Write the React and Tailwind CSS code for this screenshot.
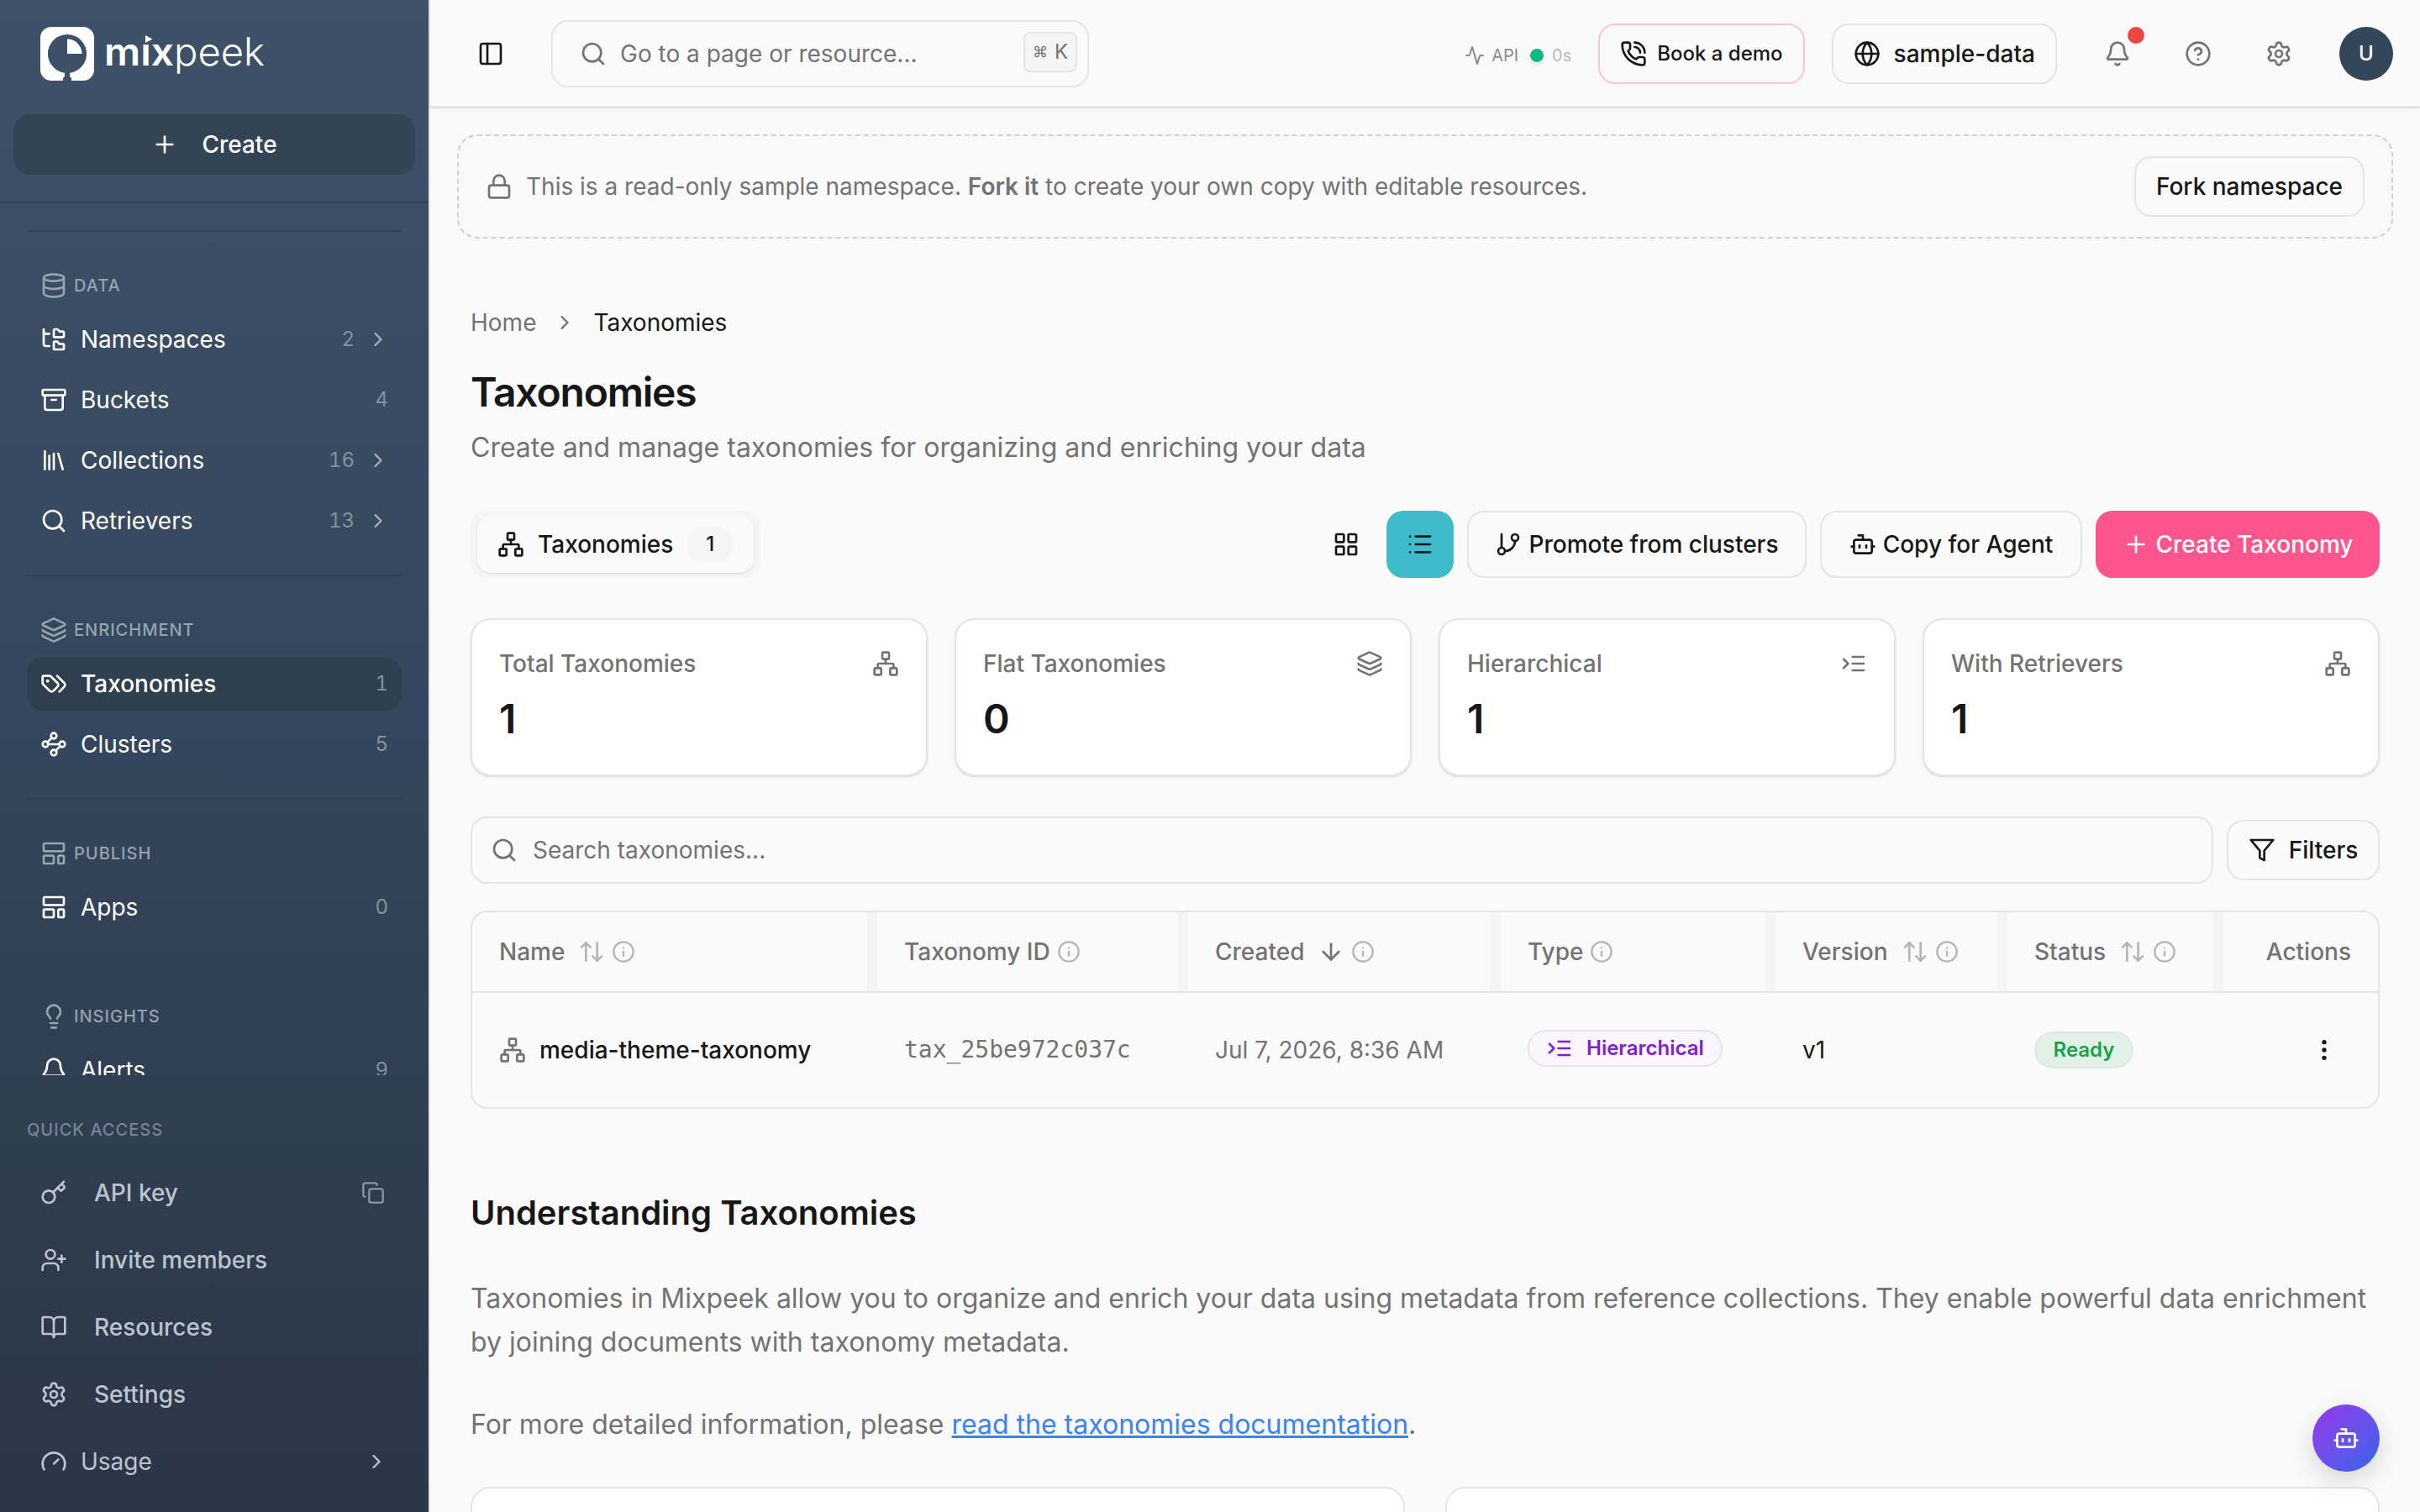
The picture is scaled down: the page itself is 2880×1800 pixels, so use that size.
import React from "react";
import {
  Plus, Database, FolderTree, Archive, Library, Search, Layers, Waypoints, LayoutTemplate,
  Lightbulb, Bell, Key, UserPlus, BookOpen, Settings, Gauge, Copy, ChevronRight, PanelLeft, Activity,
  PhoneCall, Globe, CircleHelp, Lock, Network, LayoutGrid, List, GitBranch, Bot, ArrowUpDown, Info,
  ArrowDown, EllipsisVertical,
} from "lucide-react";

function Stroke({ className, children }) {
  return (
    <svg viewBox="0 0 24 24" fill="none" stroke="currentColor" strokeWidth="2" strokeLinecap="round" strokeLinejoin="round" className={className}>
      {children}
    </svg>
  );
}

const Indent = ({ className }) => (
  <Stroke className={className}>
    <path d="m3 8 4 4-4 4M21 12H11M21 6H11M21 18H11" />
  </Stroke>
);

const Funnel = ({ className }) => (
  <Stroke className={className}>
    <polygon points="22 3 2 3 10 12.46 10 19 14 21 14 12.46 22 3" />
  </Stroke>
);

const Tags = ({ className }) => (
  <Stroke className={className}>
    <path d="m15 5 6.300 6.300a2.400 2.400 0 0 1 0 3.400L17 19" />
    <path d="M9.586 5.586A2 2 0 0 0 8.172 5H3a1 1 0 0 0-1 1v5.172a2 2 0 0 0 .586 1.414L8.290 18.290a2.426 2.426 0 0 0 3.420 0l3.580-3.580a2.426 2.426 0 0 0 0-3.420z" />
    <circle cx="6.500" cy="9.500" r=".5" fill="currentColor" />
  </Stroke>
);

const navGroups = [
  {
    label: "DATA", icon: Database, items: [
      { name: "Namespaces", icon: FolderTree, count: "2", more: true },
      { name: "Buckets", icon: Archive, count: "4" },
      { name: "Collections", icon: Library, count: "16", more: true },
      { name: "Retrievers", icon: Search, count: "13", more: true },
    ],
  },
  {
    label: "ENRICHMENT", icon: Layers, items: [
      { name: "Taxonomies", icon: Tags, count: "1", active: true },
      { name: "Clusters", icon: Waypoints, count: "5" },
    ],
  },
  { label: "PUBLISH", icon: LayoutTemplate, items: [{ name: "Apps", icon: LayoutTemplate, count: "0" }] },
  { label: "INSIGHTS", icon: Lightbulb, items: [{ name: "Alerts", icon: Bell, count: "9" }] },
];

const quick = [
  { name: "API key", icon: Key, copy: true },
  { name: "Invite members", icon: UserPlus },
  { name: "Resources", icon: BookOpen },
  { name: "Settings", icon: Settings },
];

function Logo() {
  return (
    <div className="flex h-16 items-center">
      <svg viewBox="0 0 64 64" className="size-16 shrink-0">
        <path
          fill="#fff"
          fillRule="evenodd"
          d="M13 0h38a13 13 0 0 1 13 13v38a13 13 0 0 1-13 13H37v-3l-2-2v-4.200a23 23 0 1 0-6 0V59l-2 2v3H13A13 13 0 0 1 0 51V13A13 13 0 0 1 13 0Z"
        />
        <path fill="#fff" d="M32 14.500a17.500 17.500 0 0 1 17.500 17.500H32Z" />
      </svg>
      <svg viewBox="0 0 200 64" className="ml-3 h-16 w-[200px] overflow-visible">
        <text x="0" y="46" fill="#fff" fontSize="46" fontFamily="Inter" fontWeight="600" textLength="83" lengthAdjust="spacingAndGlyphs">mix</text>
        <text x="83" y="46" fill="#fff" fontSize="46" fontFamily="Inter" fontWeight="300" textLength="108" lengthAdjust="spacingAndGlyphs">peek</text>
        <rect x="46" y="6" width="13" height="13.500" fill="#3c5166" />
        <path d="M49 10v9l8.500-4.500Z" fill="#fff" />
      </svg>
    </div>
  );
}

function Sidebar() {
  return (
    <aside className="flex h-[1800px] w-[512px] shrink-0 flex-col border-r-2 border-[#e5e5e5] bg-linear-to-b from-[#3d5268] via-[#34465b] to-[#2b3647] text-[28px]">
      <div className="h-[242px] shrink-0 border-b-2 border-[#2f4153] px-4 pt-8">
        <div className="pl-8"><Logo /></div>
        <button className="mt-10 flex h-[72px] w-full items-center justify-center gap-7 rounded-[20px] bg-[#334456] font-medium text-white">
          <Plus className="size-8" />
          <span>Create</span>
        </button>
      </div>
      <nav className="h-[1038px] shrink-0 overflow-hidden px-8">
        {navGroups.map((g) => (
          <section key={g.label} className="pt-8">
            <div className="h-0.5 bg-[#2f4153]" />
            <div className="mt-8 flex h-16 items-center gap-2 px-4 text-[20px] font-medium tracking-[0.05em] text-[#97a3b0]">
              <g.icon className="size-8" />
              <span>{g.label}</span>
            </div>
            <div className="flex flex-col gap-2">
              {g.items.map((it) => (
                <div key={it.name} className={"flex h-16 items-center rounded-[20px] pl-4 text-white " + (it.active ? "bg-[#2f3f4f] font-medium" : "")}>
                  <it.icon className="size-8" />
                  <span className="ml-4 flex-1">{it.name}</span>
                  <span className="text-[24px] font-normal text-[#8391a1] tabular-nums">{it.count}</span>
                  {it.more ? <ChevronRight className="mr-3.5 ml-3.5 size-7 text-[#a6b1bc]" /> : <span className="w-4" />}
                </div>
              ))}
            </div>
          </section>
        ))}
      </nav>
      <div className="px-8 pt-12 text-[#bcc5cd]">
        <div className="h-[34px] text-[20px] leading-[34px] font-medium tracking-[0.05em] text-[#778593]">QUICK ACCESS</div>
        <div className="mt-[18px]">
          {quick.map((q) => (
            <div key={q.name} className="flex h-20 items-center pl-4 font-medium">
              <q.icon className="size-8" />
              <span className="ml-8 flex-1">{q.name}</span>
              {q.copy && <Copy className="mr-5 size-7 text-[#8a96a3]" />}
            </div>
          ))}
          <div className="flex h-20 items-center pl-4">
            <Gauge className="size-8" />
            <span className="ml-4 flex-1">Usage</span>
            <ChevronRight className="mr-4 size-7" />
          </div>
        </div>
      </div>
    </aside>
  );
}

function Header() {
  return (
    <header className="flex h-32 shrink-0 items-center border-b-2 border-[#e5e5e5] pt-0.5 pr-8 pl-14 shadow-sm">
      <PanelLeft className="size-8" />
      <div className="ml-14 flex h-20 w-[640px] items-center rounded-[20px] border-2 border-[#e5e5e5] pr-3 pl-8 text-[#737373]">
        <Search className="size-8" />
        <span className="ml-4 flex-1">Go to a page or resource...</span>
        <kbd className="mb-1 flex h-12 w-16 items-center justify-center gap-2 rounded-lg border-2 border-[#e5e5e5] bg-[#f5f5f5] font-[Inter] text-[24px]">
          <span className="text-[18px]">⌘</span>K
        </kbd>
      </div>
      <div className="ml-auto flex items-center">
        <div className="mt-1 flex items-center text-[20px] text-[#8a8a8a]">
          <Activity className="size-6" />
          <span className="ml-2">API</span>
          <span className="mr-2 ml-3 size-5 rounded-full border-2 border-white bg-[#10b981] shadow-sm" />
          <span className="text-[#b8b8b8]">0s</span>
        </div>
        <button className="ml-8 flex h-[72px] items-center gap-3 rounded-[20px] border-2 border-[#f9c6d7] px-6 text-[24px] font-medium">
          <PhoneCall className="size-8" />
          Book a demo
        </button>
        <button className="ml-8 flex h-[72px] items-center gap-4 rounded-[20px] border-2 border-[#e5e5e5] px-6 font-medium">
          <Globe className="size-8" />
          sample-data
        </button>
        <div className="relative ml-10 flex size-16 items-center justify-center text-[#737373]">
          <Bell className="size-8" />
          <span className="absolute top-0 left-11 size-5 rounded-full bg-[#ef4444]" />
        </div>
        <CircleHelp className="ml-12 size-8 text-[#737373]" />
        <Settings className="ml-16 size-8 text-[#737373]" />
        <div className="ml-14 flex size-16 items-center justify-center rounded-full bg-[#34475a] text-[24px] font-medium text-white">U</div>
      </div>
    </header>
  );
}

const stats = [
  { label: "Total Taxonomies", value: "1", icon: Network },
  { label: "Flat Taxonomies", value: "0", icon: Layers },
  { label: "Hierarchical", value: "1", icon: Indent },
  { label: "With Retrievers", value: "1", icon: Network },
];

const columns = [
  { label: "Name", sort: "both" },
  { label: "Taxonomy ID" },
  { label: "Created", sort: "down" },
  { label: "Type" },
  { label: "Version", sort: "both" },
  { label: "Status", sort: "both" },
];

function Table() {
  return (
    <div className="mt-8 h-[236px] overflow-hidden rounded-[20px] border-2 border-[#e5e5e5]">
      <div className="grid h-24 grid-cols-[482px_370px_372px_327px_276px_257px_1fr] border-b-2 border-[#e5e5e5] font-medium text-[#737373]">
        {columns.map((c) => (
          <div key={c.label} className="flex items-center border-r-12 border-[#f4f4f4] pl-8">
            <span>{c.label}</span>
            {c.sort === "both" && <ArrowUpDown className="ml-4 size-8 opacity-50" />}
            {c.sort === "down" && <ArrowDown className="ml-4 size-8" />}
            <Info className="ml-2 size-7 opacity-50" />
          </div>
        ))}
        <div className="flex items-center justify-end pr-8">Actions</div>
      </div>
      <div className="grid h-[136px] grid-cols-[482px_370px_372px_327px_276px_257px_1fr] items-center *:pl-8">
        <div className="flex items-center gap-4 font-medium">
          <Network className="size-8 text-[#737373]" />
          media-theme-taxonomy
        </div>
        <div className="font-['DejaVu_Sans_Mono',monospace] text-[#737373]">tax_25be972c037c</div>
        <div className="text-[#737373]">Jul 7, 2026, 8:36 AM</div>
        <div className="flex pb-1">
          <span className="flex h-11 items-center gap-4 rounded-full border-2 border-[#e6e3ea] bg-[#faf5ff] px-5 text-[24px] font-semibold text-[#7e22ce]">
            <Indent className="size-8" />
            Hierarchical
          </span>
        </div>
        <div>v1</div>
        <div className="flex">
          <span className="flex h-11 w-[118px] items-center justify-center rounded-full border-2 border-[#e0e8e3] bg-[#e1f1e8] text-[24px] font-semibold text-[#16a34a]">Ready</span>
        </div>
        <div className="flex justify-end pr-12"><EllipsisVertical className="size-8" /></div>
      </div>
    </div>
  );
}

const outline = "flex items-center justify-center border-2 border-[#e5e5e5] rounded-[20px] font-medium";

export default function App() {
  return (
    <div className="relative flex h-[1800px] w-[2880px] overflow-hidden bg-[#fafafa] font-[Inter,sans-serif] text-[28px] leading-10 text-[#171717]">
      <Sidebar />
      <div className="flex min-w-0 flex-1 flex-col">
        <Header />
        <main className="flex flex-col px-12">
          <div className="-mx-4 mt-8 flex h-[124px] shrink-0 items-center rounded-3xl border-2 border-dashed border-[#d1d1d1] bg-[#f9f9f9] px-8 text-[#737373]">
            <Lock className="size-8" />
            <p className="ml-4 flex-1">This is a read-only sample namespace. <b className="font-semibold">Fork it</b> to create your own copy with editable resources.</p>
            <button className={outline + " h-[72px] bg-[#fafafa] px-6 text-[#171717]"}>Fork namespace</button>
          </div>
          <div className="mt-20 flex h-10 items-center gap-5">
            <span className="text-[#737373]">Home</span>
            <ChevronRight className="size-7 text-[#737373]" />
            <span>Taxonomies</span>
          </div>
          <h1 className="mt-[31px] h-16 text-[48px] leading-[64px] font-semibold tracking-[-0.025em]">Taxonomies</h1>
          <p className="mt-2 h-12 text-[32px] leading-[52px] text-[#737373]">Create and manage taxonomies for organizing and enriching your data</p>
          <div className="mt-[53px] flex h-20 items-center gap-4">
            <div className="mr-auto flex h-20 items-center rounded-[20px] bg-[#f5f5f5] px-2">
              <div className="flex h-[68px] items-center rounded-2xl bg-[#fafafa] px-6 font-medium shadow-sm">
                <Network className="size-8" />
                <span className="ml-4">Taxonomies</span>
                <span className="ml-4 flex h-11 w-14 items-center justify-center rounded-full bg-[#f5f5f5] text-[24px]">1</span>
              </div>
            </div>
            <div className="-mr-2 flex size-20 items-center justify-center"><LayoutGrid className="size-8" /></div>
            <div className="flex size-20 items-center justify-center rounded-[20px] bg-[#3fbccb]"><List className="size-8" /></div>
            <button className={outline + " h-20 w-[404px] gap-2"}><GitBranch className="size-8" />Promote from clusters</button>
            <button className={outline + " h-20 w-[312px] gap-2"}><Bot className="size-8" />Copy for Agent</button>
            <button className="flex h-20 w-[338px] items-center justify-center gap-2 rounded-[20px] bg-[#ff558f] font-medium text-white"><Plus className="size-8" />Create Taxonomy</button>
          </div>
          <div className="mt-12 grid grid-cols-4 gap-8">
            {stats.map((s) => (
              <div key={s.label} className="h-[188px] rounded-3xl border-2 border-[#e5e5e5] bg-white px-8 pt-8 shadow-sm">
                <div className="flex h-10 items-center justify-between font-medium text-[#737373]">
                  {s.label}
                  <s.icon className="size-8" />
                </div>
                <div className="mt-3.5 text-[48px] leading-[64px] font-semibold">{s.value}</div>
              </div>
            ))}
          </div>
          <div className="mt-12 flex items-center gap-4">
            <div className="flex h-20 flex-1 items-center rounded-[20px] border-2 border-[#e5e5e5] pl-[22px] text-[#737373]">
              <Search className="size-8" />
              <span className="ml-[18px]">Search taxonomies...</span>
            </div>
            <button className={outline + " h-[72px] w-[182px] gap-4"}><Funnel className="size-8" />Filters</button>
          </div>
          <Table />
          <h2 className="mt-24 h-14 text-[40px] leading-[56px] font-semibold">Understanding Taxonomies</h2>
          <p className="mt-12 text-[32px] leading-[52px] text-[#737373]">
            Taxonomies in Mixpeek allow you to organize and enrich your data using metadata from reference collections. They enable powerful data enrichment by joining documents with taxonomy metadata.
          </p>
          <p className="mt-[46px] text-[32px] leading-[52px] text-[#737373]">
            For more detailed information, please <a className="text-[#3b82f6] underline">read the taxonomies documentation</a>.
          </p>
          <div className="mt-12 grid grid-cols-2 gap-12">
            <div className="h-24 rounded-3xl border-2 border-[#e5e5e5] bg-white" />
            <div className="h-24 rounded-3xl border-2 border-[#e5e5e5] bg-white" />
          </div>
        </main>
      </div>
      <button className="absolute right-12 bottom-12 flex size-20 items-center justify-center rounded-full bg-linear-to-br from-[#9333ea] to-[#2563eb] text-white shadow-[0_10px_30px_rgba(0,0,0,0.15)]">
        <Bot className="size-8" />
      </button>
    </div>
  );
}
